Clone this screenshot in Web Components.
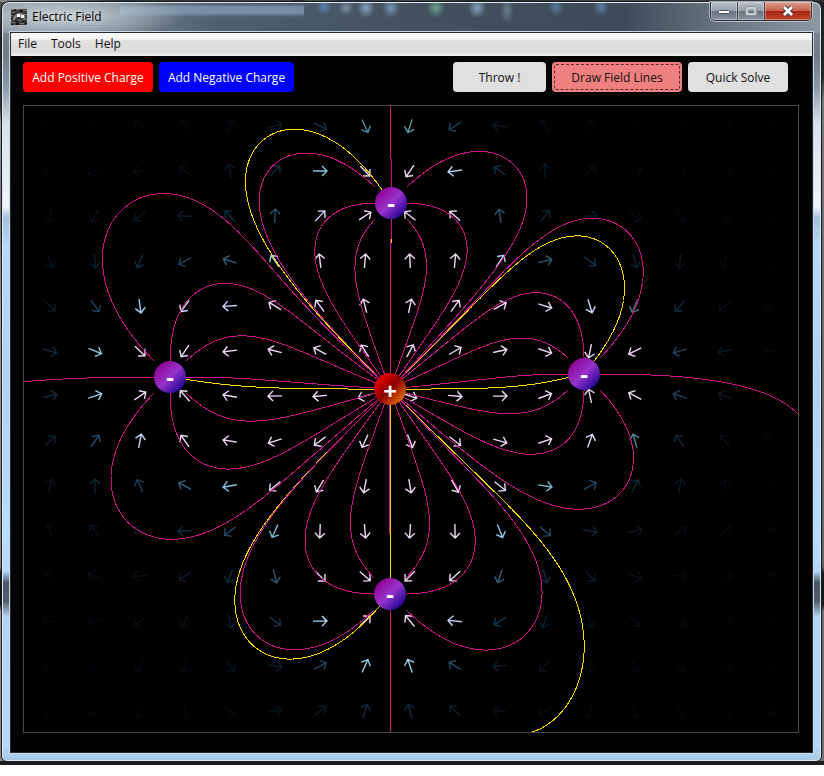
<!DOCTYPE html>
<html lang="en">
<head>
<meta charset="utf-8">
<title>Electric Field</title>
<style>
  body { margin: 0; background: #fff; font: 12px/16px "Open Sans", "Noto Sans", sans-serif; color: #000; }
</style>
</head>
<body>
<desktop-area>
  <app-window heading="Electric Field">
    <menu-bar slot="menu"></menu-bar>
    <tool-bar>
      <tool-button kind="positive">Add Positive Charge</tool-button>
      <tool-button kind="negative">Add Negative Charge</tool-button>
      <tool-button slot="end" kind="throw">Throw !</tool-button>
      <tool-button slot="end" kind="active">Draw Field Lines</tool-button>
      <tool-button slot="end" kind="solve">Quick Solve</tool-button>
    </tool-bar>
    <field-canvas></field-canvas>
  </app-window>
</desktop-area>

<script>
class BaseElement extends HTMLElement {
  connectedCallback() {
    if (this.shadowRoot) return;
    this.attachShadow({ mode: 'open' }).innerHTML = this.render();
  }
}

customElements.define('desktop-area', class extends BaseElement {
  render() {
    return `<style>
      :host { display: block; padding: 1px 2px 3px 1px;
        background:
          linear-gradient(#1c1c1e, #1c1c1e) bottom / 100% 4px no-repeat,
          linear-gradient(90deg, #888 0, #555 10%, #333 14%, #444 35%, #2a2a2c 36%, #48523c 38%, #28344c 42%, #444 50%, #282828 60%, #4a4a4a 75%, #303030) top / 100% 2px no-repeat,
          linear-gradient(#555 0, #222 5%, #333 14%, #999 16%, #777 28%, #999 40%, #888 74%, #111 75%, #111 79%, #999 80%, #888 100%) left / 12px 100% no-repeat,
          linear-gradient(#222 0, #2a2a2a 10%, #777 13%, #666 74%, #181818 75%, #181818 79%, #707070 80%) right / 12px 100% no-repeat,
          #222; }
    </style><slot></slot>`;
  }
});

customElements.define('app-window', class extends BaseElement {
  render() {
    return `<style>
      :host { display: block; padding: 0 8px 8px; border: 1px solid #16191c; border-radius: 8px 8px 6px 6px;
        box-shadow: inset 0 0 0 1px #dfeaf4;
        background:
          radial-gradient(ellipse 120px 24px at 62px 14px, rgba(225,232,236,.75), rgba(200,210,216,.45) 55%, transparent) 0 0 / 100% 31px no-repeat,
          radial-gradient(ellipse 8px 8px at 322px 5px, #5b9ad8aa, transparent),
          radial-gradient(ellipse 8px 8px at 344px 6px, #a9bccd88, transparent),
          radial-gradient(ellipse 9px 10px at 364px 6px, #9cc4ecaa, transparent),
          radial-gradient(ellipse 9px 10px at 389px 6px, #8cb4e4aa, transparent),
          radial-gradient(ellipse 9px 10px at 434px 6px, #7cc4a4aa, transparent),
          radial-gradient(ellipse 9px 10px at 475px 6px, #a8cbf2aa, transparent),
          radial-gradient(ellipse 7px 14px at 505px 8px, #8fa4b888, transparent),
          radial-gradient(ellipse 8px 9px at 554px 5px, #5f94d099, transparent),
          radial-gradient(ellipse 8px 9px at 599px 5px, #6fa0da99, transparent),
          linear-gradient(transparent 2px, #8ba5bfaa 5px, #8ba5bfaa 11px, transparent 15px) 118px 0 / 184px 31px no-repeat,
          linear-gradient(90deg, #8996a0 0, #7a8792 12%, #506070 26%, #43515f 50%, #3e4c5a 76%, #707c86 90%, #8c979f) 0 0 / 100% 31px no-repeat,
          linear-gradient(#84909a 0, #6f7b86 7%, #8797a6 11%, #d8e2ea 16%, #eef5fb 27%, #a4c0da 28.5%, #b8d8f8 32%, #b0d2f2 50%, #b8dcfe 70%, #b6d8f8 75%, #4a5866 76.5%, #53616f 79%, #b2d4f2 81%, #b6d8f8 98%, #a6c8e6); }
      header { display: flex; align-items: flex-start; height: 30px; color: #000; }
      .icon { width: 16px; height: 16px; margin: 7px 5px 0 1px; flex: none; }
      h1 { margin: 7px 0 0; font: inherit; flex: 1; text-shadow: 0 0 5px #fff8, 0 0 8px #fff6; }
      .caption { display: flex; margin-right: 1px; height: 18px; border: 1px solid #2f363d; border-top: 0; border-radius: 0 0 5px 5px;
        box-shadow: 0 0 0 1px #c4ccd4cc; overflow: hidden; }
      .caption button { width: 27px; padding: 0; border: 0; border-right: 1px solid #39424b; display: grid; place-items: center;
        background: linear-gradient(#b9c0c7, #98a2ab 48%, #66717c 50%, #8b959f); box-shadow: inset 0 0 0 1px #ffffff55; }
      .caption button.close { width: 46px; border-right: 0; background: linear-gradient(#dd9c8e, #c8604c 48%, #a52411 50%, #c4452c); }
      .client { border: 1px solid #252c33; box-shadow: 0 0 0 1px #c9d8e6; background: #030303; padding-bottom: 19px; }
    </style>
    <header>
      <svg class="icon" viewBox="0 0 16 16" aria-hidden="true">
        <rect width="16" height="16" fill="#3c3c3c"/>
        <path d="M0 0h3v1H0zM5 0h4v1H5zM12 1h4v1h-4zM1 3h3v1H1zM0 6h2v1H0zM13 5h3v1h-3zM2 10h2v1H2zM7 11h3v1H7zM12 10h4v1h-4zM1 13h3v1H1zM9 14h4v1H9z" fill="#757575"/>
        <path d="M3 1h2v1H3zM9 1h2v2H9zM1 5h3v1H1zM12 7h3v2h-3zM0 9h2v1H0zM4 12h4v1H4zM11 12h3v1h-3zM5 14h3v2H5zM0 15h2v1H0zM14 14h2v1h-2z" fill="#111"/>
        <path d="M1 11l3-5 4-2 5 1 2 4-2 1-3-2-4 0-2 2z" fill="#8a8a8a"/>
        <path d="M6 5h3v3H6zM10 6h3v3h-3z" fill="#fff"/>
      </svg>
      <h1>${this.getAttribute('heading')}</h1>
      <div class="caption">
        <button aria-label="Minimize"><svg width="14" height="8"><rect x="1.5" y="3.5" width="11" height="3" rx="1" fill="#fff" stroke="#4c535c"/></svg></button>
        <button aria-label="Maximize" disabled><svg width="12" height="10"><rect x="2" y="2" width="8" height="6" fill="none" stroke="#c8cdd2" stroke-width="2"/><rect x=".5" y=".5" width="11" height="9" rx="1" fill="none" stroke="#8c949c"/></svg></button>
        <button class="close" aria-label="Close"><svg width="14" height="12" viewBox="0 0 14 12"><path d="M3 2l8 8M11 2l-8 8" stroke="#4a4750" stroke-width="4.6"/><path d="M3 2l8 8M11 2l-8 8" stroke="#fff" stroke-width="2.6"/></svg></button>
      </div>
    </header>
    <div class="client"><slot name="menu"></slot><slot></slot></div>`;
  }
});

customElements.define('menu-bar', class extends BaseElement {
  render() {
    return `<style>
      :host { display: block; height: 23px; background: linear-gradient(#fafafa 0, #f2f2f2 28%, #e4e3e3 30%, #dbdad9 82%, #f0f0f0 100%); }
      nav { display: flex; }
      button { font: inherit; color: #111; background: none; border: 0; padding: 3px 7px 4px; }
    </style><nav aria-label="Main"><button>File</button><button>Tools</button><button>Help</button></nav>`;
  }
});

customElements.define('tool-bar', class extends BaseElement {
  render() {
    return `<style>
      :host { display: flex; justify-content: space-between; padding: 6px 24px 13px 12px; }
      div { display: flex; gap: 6px; }
    </style><div><slot></slot></div><div><slot name="end"></slot></div>`;
  }
});

customElements.define('tool-button', class extends BaseElement {
  render() {
    return `<style>
      :host { display: block; width: 130px; }
      :host([kind=negative]) { width: 135px; }
      :host([kind=throw]) { width: 93px; }
      :host([kind=solve]) { width: 100px; }
      button { font: inherit; width: 100%; height: 30px; padding: 2px 0 0; border: 0; border-radius: 4px; background: #e0e0e0; color: #111; white-space: nowrap; }
      :host([kind=positive]) button { background: #f00; color: #fff; }
      :host([kind=negative]) button { background: #00f; color: #fff; }
      :host([kind=active]) button { background: #f08080; outline: 1px dashed #5a2c2c; outline-offset: -3px; }
    </style><button><slot></slot></button>`;
  }
});

const POSITIVE = { x: 390, y: 389, q: 5 };
const NEGATIVE = [[391, 203], [170, 377], [584, 374], [390, 594]].map(([x, y]) => ({ x, y, q: -1 }));
const CHARGES = [POSITIVE, ...NEGATIVE];
const AREA = { left: 24, top: 106, right: 798, bottom: 732 };

function fieldAt(x, y) {
  let ex = 0, ey = 0;
  for (const c of CHARGES) {
    const dx = x - c.x, dy = y - c.y, k = c.q / Math.hypot(dx, dy) ** 3;
    ex += dx * k;
    ey += dy * k;
  }
  return [ex, ey, Math.hypot(ex, ey)];
}

function traceLine(x, y, sign) {
  let d = `M${x} ${y}`;
  for (let i = 0; i < 4000; i++) {
    const [ex, ey, m] = fieldAt(x, y);
    x += ex / m * sign;
    y += ey / m * sign;
    d += `L${x.toFixed(1)} ${y.toFixed(1)}`;
    if (x < AREA.left || x > AREA.right || y < AREA.top || y > AREA.bottom) break;
    if (i > 10 && CHARGES.some(c => Math.hypot(c.x - x, c.y - y) < 12)) break;
  }
  return d;
}

/* Field strength to arrow colour, interpolated on a log scale. */
const RAMP = [
  [4, [3, 6, 9]], [8, [4, 11, 16]], [16, [6, 20, 29]], [34, [12, 38, 54]], [50, [20, 54, 78]],
  [70, [38, 76, 106]], [88, [60, 110, 136]], [110, [92, 156, 168]], [122, [140, 198, 226]],
  [145, [176, 216, 250]], [185, [212, 212, 252]], [225, [240, 216, 246]]
];
function strengthColour(m) {
  const v = m * 1e6;
  if (v <= RAMP[0][0]) return `rgb(${RAMP[0][1]})`;
  for (let i = 1; i < RAMP.length; i++) {
    const [hi, b] = RAMP[i], [lo, a] = RAMP[i - 1];
    if (v <= hi) {
      const t = Math.log(v / lo) / Math.log(hi / lo);
      return `rgb(${a.map((n, k) => Math.round(n + (b[k] - n) * t))})`;
    }
  }
  return `rgb(${RAMP[RAMP.length - 1][1]})`;
}

customElements.define('field-canvas', class extends BaseElement {
  render() {
    let arrows = '', under = '', lines = '', over = '';
    for (let row = 0; row < 14; row++) for (let col = 0; col < 17; col++) {
      const x = 50 + col * 45, y = 126 + row * 45;
      const [ex, ey, m] = fieldAt(x, y);
      const a = Math.round(Math.atan2(ey, ex) * 180 / Math.PI);
      arrows += `<path d="M-7 0H6M2-5L7 0L2 5" transform="translate(${x} ${y}) rotate(${a})" stroke="${strengthColour(m)}"/>`;
    }
    for (const i of [-16, 0, 16]) for (const j of [-16, 0, 16]) {
      if (!i && !j) continue;
      const gold = `<path d="${traceLine(POSITIVE.x + i, POSITIVE.y + j, 1)}" stroke="#ffd700"/>`;
      if ((i === 0 && j < 0) || (i < 0 && j > 0)) under += gold; else over += gold;
      for (const c of NEGATIVE) lines += `<path d="${traceLine(c.x + i, c.y + j, -1)}" stroke="#c71585"/>`;
    }
    const balls = CHARGES.map(c => `<circle cx="${c.x}" cy="${c.y}" r="16" fill="url(#${c.q > 0 ? 'pos' : 'neg'})"/>
      <text class="${c.q > 0 ? 'plus' : 'minus'}" x="${c.x}" y="${c.y + (c.q > 0 ? 11 : 9)}">${c.q > 0 ? '+' : '-'}</text>`).join('');
    return `<style>
      :host { display: block; margin: 0 13px 0 12px; border: 1px solid #484848; background: #000; }
      svg { display: block; width: 100%; height: auto; }
      text { font: bold 24px "Open Sans", "Noto Sans", sans-serif; fill: #fff; text-anchor: middle; }
      .arrows { fill: none; stroke-width: 1.4; }
      .lines { fill: none; stroke-width: 1; shape-rendering: crispEdges; }
    </style>
    <svg viewBox="24 106 774 626" role="img" aria-label="Electric field of one positive and four negative charges">
      <defs>
        <linearGradient id="neg" x1="0" y1="0" x2="1" y2="1"><stop offset=".1" stop-color="#8b008b"/><stop offset=".5" stop-color="#9932cc"/><stop offset=".88" stop-color="#1c0490"/></linearGradient>
        <linearGradient id="pos" x1="0" y1="0" x2="1" y2="1"><stop offset=".12" stop-color="#f00000"/><stop offset=".5" stop-color="#8b0000"/><stop offset=".9" stop-color="#e87400"/></linearGradient>
      </defs>
      <g class="arrows">${arrows}</g>
      <g class="lines">${under}${lines}${over}</g>
      ${balls}
    </svg>`;
  }
});
</script>
</body>
</html>
